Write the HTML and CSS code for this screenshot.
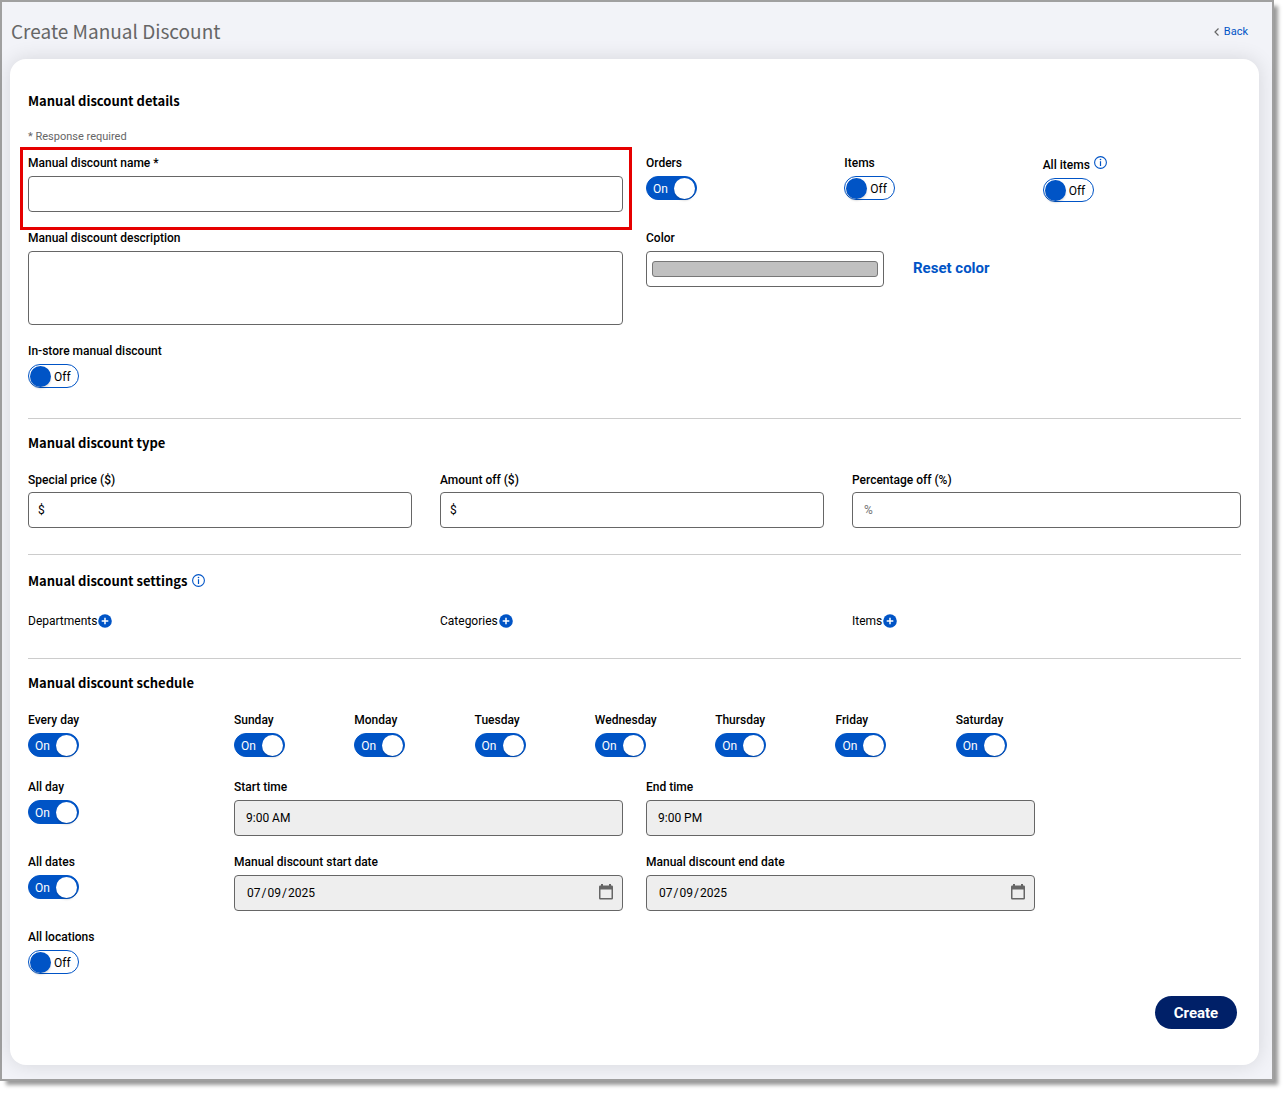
FILE: index.html
```html
<!DOCTYPE html>
<html lang="en-US">
<head>
<meta charset="utf-8">
<title>Create Manual Discount</title>
<link rel="stylesheet" href="styles.css">
</head>
<body>
<svg class="sprite" aria-hidden="true">
  <symbol id="info" viewBox="0 0 13 13"><circle cx="6.5" cy="6.5" r="5.9" fill="none" stroke="currentColor" stroke-width="1.1"/><path d="M6.5 5.2V10" stroke="currentColor" stroke-width="1.2"/><circle cx="6.5" cy="3.5" r=".8" fill="currentColor"/></symbol>
  <symbol id="plus" viewBox="0 0 14 14"><circle cx="7" cy="7" r="6.8" fill="currentColor"/><path d="M7 3.7v6.6M3.7 7h6.6" stroke="#fff" stroke-width="1.5"/></symbol>
  <symbol id="calendar" viewBox="0 0 14 16"><path d="M2 0h2v1.5h6V0h2v1.5h.7A1.3 1.3 0 0 1 14 2.8v11.4a1.3 1.3 0 0 1-1.3 1.3H1.3A1.3 1.3 0 0 1 0 14.200V2.800a1.300 1.300 0 0 1 1.300-1.300H2zM1.500 5.500v8.500h11V5.500z" fill="currentColor" fill-rule="evenodd"/></symbol>
</svg>
<main class="window">
  <header class="topbar">
    <h1 class="title">Create Manual Discount</h1>
    <a class="back" href="#"><svg class="chevron" viewBox="0 0 5 8" aria-hidden="true"><path d="M4.500.500 1 4l3.500 3.500" fill="none" stroke="currentColor" stroke-width="1.200"/></svg>Back</a>
  </header>
  <form class="card">
    <section class="section">
      <h2 class="heading">Manual discount details</h2>
      <p class="note">* Response required</p>
      <div class="halves">
        <div class="field highlighted"><label class="label" for="name">Manual discount name *</label><input class="input" id="name" type="text" required></div>
        <div class="scopes">
          <label class="field"><span class="label">Orders</span><span class="switch"><input type="checkbox" checked><span class="state">On</span></span></label>
          <label class="field"><span class="label">Items</span><span class="switch"><input type="checkbox"><span class="state">Off</span></span></label>
          <label class="field"><span class="label with-info">All items <svg class="info" aria-hidden="true"><use href="#info"/></svg></span><span class="switch"><input type="checkbox"><span class="state">Off</span></span></label>
        </div>
        <div class="field"><label class="label" for="description">Manual discount description</label><textarea class="input area" id="description"></textarea></div>
        <div class="color-row">
          <div class="field"><label class="label" for="color">Color</label><input class="input color" id="color" type="color" value="#c0c0c0"></div>
          <button class="reset" type="button">Reset color</button>
        </div>
        <label class="field"><span class="label">In-store manual discount</span><span class="switch"><input type="checkbox"><span class="state">Off</span></span></label>
      </div>
    </section>
    <section class="section type">
      <h2 class="heading">Manual discount type</h2>
      <div class="thirds">
        <div class="field money"><label class="label" for="price">Special price ($)</label><input class="input" id="price" type="text" value="$"></div>
        <div class="field money"><label class="label" for="amount">Amount off ($)</label><input class="input" id="amount" type="text" value="$"></div>
        <div class="field percent"><label class="label" for="percent">Percentage off (%)</label><input class="input" id="percent" type="text" placeholder="%"></div>
      </div>
    </section>
    <section class="section settings">
      <h2 class="heading with-icon">Manual discount settings <svg class="info" aria-hidden="true"><use href="#info"/></svg></h2>
      <div class="thirds">
        <div class="picker">Departments<button class="add" type="button" aria-label="Add departments"><svg aria-hidden="true"><use href="#plus"/></svg></button></div>
        <div class="picker">Categories<button class="add" type="button" aria-label="Add categories"><svg aria-hidden="true"><use href="#plus"/></svg></button></div>
        <div class="picker">Items<button class="add" type="button" aria-label="Add items"><svg aria-hidden="true"><use href="#plus"/></svg></button></div>
      </div>
    </section>
    <section class="section schedule">
      <h2 class="heading">Manual discount schedule</h2>
      <div class="sixths">
        <label class="field"><span class="label">Every day</span><span class="switch"><input type="checkbox" checked><span class="state">On</span></span></label>
        <div class="days">
          <label class="field"><span class="label">Sunday</span><span class="switch"><input type="checkbox" checked><span class="state">On</span></span></label>
          <label class="field"><span class="label">Monday</span><span class="switch"><input type="checkbox" checked><span class="state">On</span></span></label>
          <label class="field"><span class="label">Tuesday</span><span class="switch"><input type="checkbox" checked><span class="state">On</span></span></label>
          <label class="field"><span class="label">Wednesday</span><span class="switch"><input type="checkbox" checked><span class="state">On</span></span></label>
          <label class="field"><span class="label">Thursday</span><span class="switch"><input type="checkbox" checked><span class="state">On</span></span></label>
          <label class="field"><span class="label">Friday</span><span class="switch"><input type="checkbox" checked><span class="state">On</span></span></label>
          <label class="field"><span class="label">Saturday</span><span class="switch"><input type="checkbox" checked><span class="state">On</span></span></label>
        </div>
        <label class="field first"><span class="label">All day</span><span class="switch"><input type="checkbox" checked><span class="state">On</span></span></label>
        <div class="field wide"><label class="label" for="start-time">Start time</label><input class="input" id="start-time" type="text" value="9:00 AM" disabled></div>
        <div class="field wide"><label class="label" for="end-time">End time</label><input class="input" id="end-time" type="text" value="9:00 PM" disabled></div>
        <label class="field first"><span class="label">All dates</span><span class="switch"><input type="checkbox" checked><span class="state">On</span></span></label>
        <div class="field wide"><label class="label" for="start-date">Manual discount start date</label><span class="date"><input class="input" id="start-date" type="date" value="2025-07-09" disabled><svg class="calendar" aria-hidden="true"><use href="#calendar"/></svg></span></div>
        <div class="field wide"><label class="label" for="end-date">Manual discount end date</label><span class="date"><input class="input" id="end-date" type="date" value="2025-07-09" disabled><svg class="calendar" aria-hidden="true"><use href="#calendar"/></svg></span></div>
        <label class="field first"><span class="label">All locations</span><span class="switch"><input type="checkbox"><span class="state">Off</span></span></label>
      </div>
    </section>
    <div class="actions"><button class="create" type="submit">Create</button></div>
  </form>
</main>
</body>
</html>
```
FILE: styles.css
```css
* { box-sizing: border-box; }
body {
  margin: 0;
  background: #fff;
  color: #000;
  font: 400 12px/16px Roboto, "Liberation Sans", sans-serif;
}
button, input, textarea { font: inherit; color: inherit; margin: 0; }
button { padding: 0; border: 0; background: none; cursor: pointer; }
.sprite { display: none; }

.window {
  margin: 0 12px 12px 0;
  padding: 0 13px 14px 8px;
  border: 2px solid #a0a0a0;
  background: #f2f3f8;
  box-shadow: 5px 5px 4px -1px rgba(0, 0, 0, .4);
}
.topbar {
  display: flex;
  justify-content: space-between;
  align-items: center;
  height: 57px;
  padding: 0 11px 0 1px;
}
.title {
  margin: 0;
  color: #666;
  font: 400 19px/26px "Noto Sans CJK SC", "Noto Sans", sans-serif;
}
.back {
  display: flex;
  align-items: center;
  gap: 5px;
  padding-top: 2px;
  color: #0054c6;
  font-size: 11px;
  text-decoration: none;
}
.chevron { width: 5px; height: 8px; color: #666; }

.card {
  padding: 18px 18px 36px;
  border-radius: 16px;
  background: #fff;
  box-shadow: 0 0 20px rgba(0, 0, 0, .12);
}
.section { padding: 14px 0 30px; border-bottom: 1px solid #ccc; }
.section.type { padding-bottom: 26px; }
.section.settings { padding-bottom: 29px; }
.section.schedule { padding-bottom: 22px; border: 0; }
.heading {
  margin: 0 0 19px;
  font: 700 13px/20px "Noto Sans CJK SC", "Noto Sans", sans-serif;
}
.heading.with-icon { display: flex; gap: 5px; margin-bottom: 20px; line-height: 24px; }
.with-icon .info { margin-top: 5px; }
.note { margin: -1px 0 10px; color: #666; font-size: 11px; }

.halves { display: grid; grid-template-columns: 1fr 1fr; gap: 18px 23px; }
.thirds { display: grid; grid-template-columns: repeat(3, 1fr); gap: 23px; }
.sixths { display: grid; grid-template-columns: repeat(6, 1fr); gap: 18px 23px; }
.scopes { display: grid; grid-template-columns: repeat(3, 1fr); }
.days {
  grid-column: span 5;
  display: grid;
  grid-template-columns: repeat(7, 1fr);
  padding: 0 165px 4px 0;
}
.first { grid-column: 1; }
.wide { grid-column: span 2; }

.field { display: flex; flex-direction: column; align-items: flex-start; gap: 5px; min-width: 0; }
.type .field { gap: 4px; }
.money { padding-right: 5px; }
.label { font-weight: 500; }
.with-info { display: flex; gap: 4px; height: 18px; line-height: 20px; }
.info { width: 13px; height: 13px; color: #0054c6; }
.with-info .info { margin-top: 1px; }

.input {
  width: 100%;
  height: 36px;
  padding: 0 11px;
  border: 1px solid #666;
  border-radius: 4px;
  background: #fff;
}
.money .input { padding: 0 9px; }
.input::placeholder { color: #757575; font-size: 12px; }
.input:disabled { background: #eee; color: #000; }
.area { display: block; height: 74px; padding: 8px 11px; resize: none; }
.highlighted { position: relative; }
.highlighted::after {
  content: "";
  position: absolute;
  inset: -8px -9px -18px -8px;
  border: 3px solid #e60000;
  pointer-events: none;
}

.color-row { display: grid; grid-template-columns: 2fr 3fr; }
.color { padding: 9px 5px; }
.color::-webkit-color-swatch-wrapper { padding: 0; }
.color::-webkit-color-swatch { border: 1px solid #777; border-radius: 3px; }
.reset {
  align-self: start;
  justify-self: start;
  margin: 28px 0 0 29px;
  color: #0054c6;
  font-size: 15px;
  line-height: 20px;
  font-weight: 700;
}

.switch { display: inline-grid; align-items: center; }
.switch > * { grid-area: 1 / 1; }
.switch input {
  appearance: none;
  display: flex;
  align-items: center;
  width: 51px;
  height: 24px;
  padding: 0 1px;
  border: 1px solid #0054c6;
  border-radius: 12px;
  background: #fff;
}
.switch input::before {
  content: "";
  width: 21px;
  height: 21px;
  border-radius: 50%;
  background: #0054c6;
  box-shadow: 0 2px 2px rgba(0, 0, 0, .12);
}
.switch input:checked { justify-content: flex-end; background: #0054c6; }
.switch input:checked::before { background: #fff; }
.state { padding: 2px 0 0 26px; pointer-events: none; }
input:checked + .state { padding-left: 7px; color: #fff; }

.picker { display: flex; align-items: center; gap: 1px; height: 16px; }
.add { display: flex; color: #0054c6; }
.add svg { width: 14px; height: 14px; }

.date { position: relative; width: 100%; }
.date .input { display: block; }
.date .input::-webkit-calendar-picker-indicator { opacity: 0; }
.calendar {
  position: absolute;
  top: 9px;
  right: 10px;
  width: 14px;
  height: 16px;
  color: #666;
  pointer-events: none;
}

.actions { display: flex; justify-content: flex-end; padding-right: 4px; }
.create {
  width: 82px;
  height: 33px;
  border-radius: 17px;
  background: #002068;
  color: #fff;
  font-size: 15px;
  font-weight: 700;
}
```
